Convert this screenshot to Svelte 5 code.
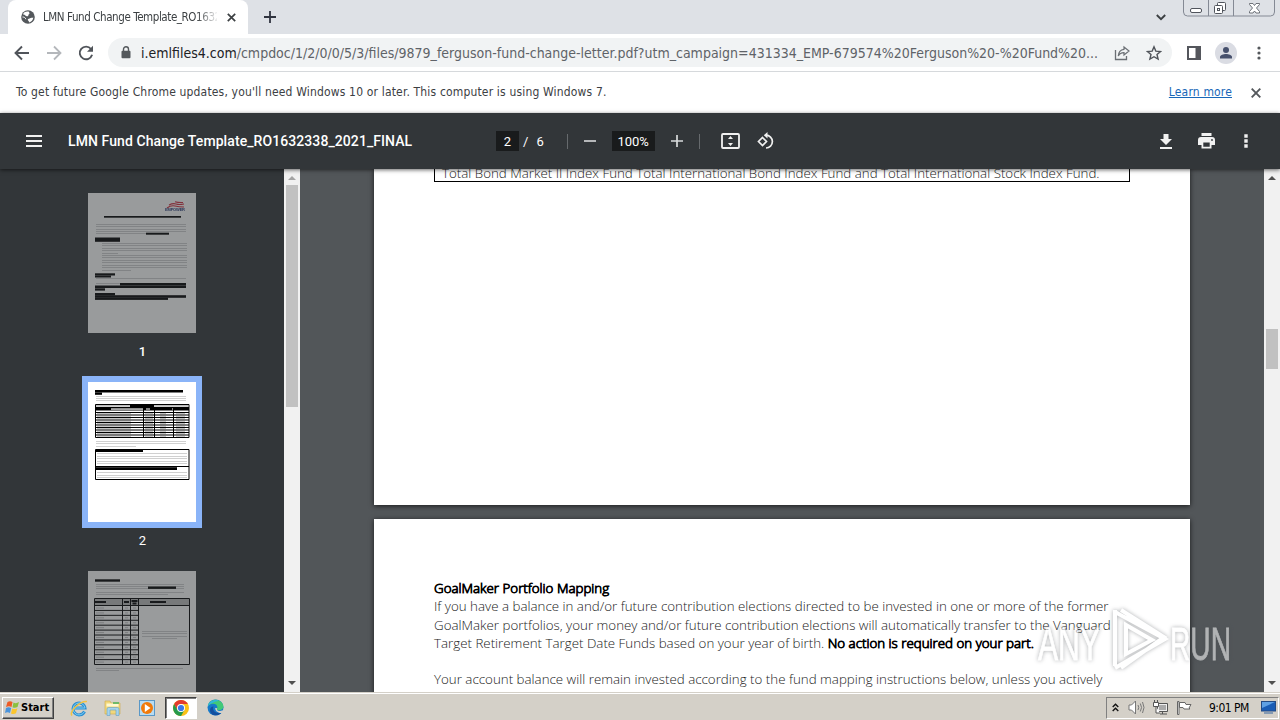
<script lang="ts">
  type Bar = [x: number, y: number, w: number, h: number]

  const address = {
    host: 'i.emlfiles4.com',
    path: '/cmpdoc/1/2/0/0/5/3/files/9879_ferguson-fund-change-letter.pdf?utm_campaign=431334_EMP-679574%20Ferguson%20-%20Fund%20...',
  }

  const row = (x: number, w: number, ys: number[]): Bar[] => ys.map((y) => [x, y, w, 0.7])

  const pages: { number: number; lines: Bar[]; bold: Bar[] }[] = [
    {
      number: 1,
      lines: [
        ...row(8, 90, [31, 33, 36, 38, 85]),
        ...row(8, 50, [40]),
        ...row(14, 85, [50, 52, 55, 57, 62, 64, 67, 69, 72, 74]),
        ...row(14, 16, [60]),
        ...row(14, 29, [77]),
        ...row(8, 24, [90]),
      ],
      bold: [
        [16, 23, 77, 1.7], [58, 39.7, 23, 2], [7, 44.5, 25, 4.3], [7, 80.3, 20, 2.2], [7, 82.5, 16, 2],
        [32, 90, 66, 2.5], [7, 92.5, 91, 2.5], [7, 95.3, 10, 2.3], [7, 100, 20, 2.4], [7, 102.2, 91, 2.6], [7, 104.6, 73, 2.3],
      ],
    },
    {
      number: 2,
      lines: [
        ...row(8, 90, [14, 16, 18, 59, 61]),
        ...row(8, 40, [64]),
        ...row(9, 90, [71, 74, 76, 79, 81, 90, 93, 95]),
      ],
      bold: [[7, 8, 88, 2.5], [7, 10.5, 7, 2.3], [8, 68, 47, 2], [8, 85.2, 81, 2.8]],
    },
    {
      number: 3,
      lines: [
        ...row(8, 88, [13, 15, 17, 21]),
        ...row(8, 72, [23]),
        ...row(54, 45, [60, 62, 65]),
        ...row(64, 25, [67]),
        ...row(8, 87, [97]),
        ...row(8, 23, [99]),
      ],
      bold: [[7, 8.3, 25, 2.4], [60, 15.5, 28, 2.4], [7, 30, 11, 2], [36, 30, 5, 2], [43.5, 29, 6, 2], [44.5, 31.5, 4, 2], [62, 30, 16, 2]],
    },
  ]

  const fundRows = Array.from({ length: 10 }, (_, i) => 30.5 + i * 2.5)
  const mappingRows = Array.from({ length: 12 }, (_, i) => 34.5 + i * 4.92)
  const current = 2
</script>

<div class="desktop">
  <div class="tabstrip">
    <div class="tab">
      <svg class="globe" width="14" height="14" viewBox="0 0 14 14">
        <circle cx="7" cy="7" r="6.8" fill="#54585c" />
        <path d="M2 4.500C4 4 4 6 6 6.300c2 .2 1-2 2.500-2.500L8 1.800C5 1 2.500 2.500 2 4.500zM8.500 8.500c1.500-1 3-.5 3.800-1-.2 2.500-2 4.500-4.200 5 .4-1-1-1.600-1.300-2.400C6.500 9 7.500 9 8.500 8.500z" fill="#fff" />
        <path d="M1.500 7c1.500 0 3 .6 3.300 2.200" stroke="#fff" fill="none" />
      </svg>
      <span class="tab-title">LMN Fund Change Template_RO1632</span>
      <svg width="9" height="9" viewBox="0 0 9 9"><path d="M.8.8l7.400 7.400M8.200.8L.8 8.200" stroke="#3c4043" stroke-width="1.700" /></svg>
    </div>
    <svg class="new-tab" width="12" height="12" viewBox="0 0 12 12"><path d="M6 0v12M0 6h12" stroke="#303440" stroke-width="1.800" /></svg>
    <svg class="tab-search" width="10" height="7" viewBox="0 0 10 7"><path d="M.8 1L5 5.200 9.200 1" stroke="#3c4043" stroke-width="1.900" fill="none" /></svg>
    <svg class="window-buttons" width="94" height="18" viewBox="0 0 94 18">
      <path d="M1.500 0v12q0 4 4 4h83q4 0 4-4V0M26.500 0v16M51.500 0v16" fill="none" stroke="#848994" />
      <rect x="8.500" y="8.500" width="11" height="4" rx="1.500" fill="#fff" stroke="#50545c" />
      <rect x="35.500" y="2.500" width="8" height="8" rx="1" fill="#fff" stroke="#50545c" />
      <rect x="32.500" y="5.500" width="8" height="8" rx="1" fill="#fff" stroke="#50545c" />
      <rect x="35.500" y="8.500" width="2" height="2" fill="none" stroke="#50545c" />
      <path d="M67.500 3.500h3.500l1.500 2 1.500-2h3.500v1l-3 3.500 3 3.500v1.500H74l-1.500-2-1.500 2h-3.500v-1.500l3-3.500-3-3.500z" fill="#fff" stroke="#60646c" stroke-width=".9" />
    </svg>
  </div>

  <div class="toolbar">
    <svg class="nav" width="16" height="16" viewBox="0 0 16 16"><path d="M15 8H2M8 1.500L1.500 8 8 14.500" fill="none" stroke="#50545a" stroke-width="1.900" /></svg>
    <svg class="nav" width="16" height="16" viewBox="0 0 16 16"><path d="M1 8h13M8 1.500L14.500 8 8 14.500" fill="none" stroke="#b4b7bb" stroke-width="1.800" /></svg>
    <svg class="nav" width="16" height="16" viewBox="0 0 16 16">
      <path d="M13 4A6.300 6.300 0 1 0 14.100 9.800" fill="none" stroke="#50545a" stroke-width="1.900" />
      <path d="M15 .8v6H9z" fill="#50545a" />
    </svg>
    <div class="omnibox">
      <svg width="10" height="13" viewBox="0 0 10 13">
        <path d="M2.500 5V3.300a2.500 2.500 0 0 1 5 0V5" fill="none" stroke="#54585c" stroke-width="1.400" />
        <rect x=".5" y="4.700" width="9" height="7.500" rx="1" fill="#54585c" />
      </svg>
      <span class="url"><b>{address.host}</b>{address.path}</span>
      <svg class="share" width="16" height="16" viewBox="0 0 16 16">
        <path d="M1.500 5v9.500h11V11" fill="none" stroke="#6b6f74" stroke-width="1.300" />
        <path d="M10 2l5 4-5 4V7.700C7.300 7.700 5.500 8.500 4.300 11c.2-4 2.300-6.300 5.700-6.700z" fill="none" stroke="#6b6f74" stroke-width="1.200" />
      </svg>
      <svg width="16" height="16" viewBox="0 0 16 16"><path d="M8 1.800l1.800 4.300 4.700.4-3.500 3 1.100 4.600L8 11.700l-4.100 2.400L5 9.500l-3.500-3 4.700-.4z" fill="none" stroke="#50545a" stroke-width="1.400" /></svg>
    </div>
    <svg class="side-panel" width="14" height="14" viewBox="0 0 14 14"><path d="M0 0h14v14H0zM2 2v10h6.500V2z" fill="#54565c" fill-rule="evenodd" /></svg>
    <svg class="avatar" width="22" height="22" viewBox="0 0 22 22">
      <circle cx="11" cy="11" r="11" fill="#dadce3" />
      <circle cx="11" cy="8" r="3" fill="#46506c" />
      <path d="M5 16.500v-1.500c0-2 3.500-3 6-3s6 1 6 3v1.500z" fill="#46506c" />
    </svg>
    <svg class="dots" width="4" height="14" viewBox="0 0 4 14"><g fill="#54585c"><circle cx="2" cy="2" r="1.600" /><circle cx="2" cy="7" r="1.600" /><circle cx="2" cy="12" r="1.600" /></g></svg>
  </div>

  <div class="infobar">
    <span class="notice">To get future Google Chrome updates, you'll need Windows 10 or later. This computer is using Windows 7.</span>
    <a href="#learn">Learn more</a>
    <svg width="10" height="10" viewBox="0 0 10 10"><path d="M.7.7l8.600 8.600M9.300.7L.7 9.300" stroke="#54585c" stroke-width="1.900" /></svg>
  </div>

  <div class="viewer-bar">
    <svg class="menu" width="16" height="12" viewBox="0 0 16 12"><path d="M0 1h16M0 6h16M0 11h16" stroke="#f1f1f1" stroke-width="2" /></svg>
    <span class="doc-title">LMN Fund Change Template_RO1632338_2021_FINAL</span>
    <div class="controls">
      <span class="field page-field">2</span>
      <span class="slash">/</span>
      <span class="count">6</span>
      <i></i>
      <svg class="minus" width="12" height="12" viewBox="0 0 12 12"><path d="M0 6h12" stroke="#d8dadb" stroke-width="1.600" /></svg>
      <span class="field zoom-field">100%</span>
      <svg class="plus" width="12" height="12" viewBox="0 0 12 12"><path d="M0 6h12M6 0v12" stroke="#d8dadb" stroke-width="1.700" /></svg>
      <i class="second"></i>
      <svg class="fit" width="19" height="16" viewBox="0 0 19 16">
        <rect x="1" y="1" width="17" height="14" rx="1" fill="none" stroke="#f1f1f1" stroke-width="1.800" />
        <path d="M9.500 3l2.500 3H7zM9.500 13L7 10h5z" fill="#f1f1f1" />
      </svg>
      <svg class="rotate" width="18" height="18" viewBox="0 0 18 18">
        <path d="M5.500 5.500L9.500 9.500l-4 4-4-4z" fill="none" stroke="#f1f1f1" stroke-width="1.700" />
        <path d="M9 3.200a6.400 6.400 0 1 1 0 12.800" fill="none" stroke="#f1f1f1" stroke-width="1.700" />
        <path d="M10.500 0v6.400L6.800 3.200z" fill="#f1f1f1" />
      </svg>
    </div>
    <div class="actions">
      <svg width="12" height="15" viewBox="0 0 12 15"><path d="M3.500 0h5v5H12l-6 6-6-6h3.500zM0 13h12v2H0z" fill="#f1f1f1" /></svg>
      <svg width="17" height="16" viewBox="0 0 17 16">
        <path d="M3.500 0h10v3h-10zM3 4h11q3 0 3 3v5h-3.500v3.500h-10V12H0V7q0-3 3-3zM5.300 9.500v4.200h6.400V9.500z" fill="#f1f1f1" fill-rule="evenodd" />
        <circle cx="14" cy="7" r=".9" fill="#323639" />
      </svg>
      <svg class="more" width="4" height="14" viewBox="0 0 4 14"><path d="M.3.3h3.400v3.400H.3zM.3 5.300h3.400v3.400H.3zM.3 10.300h3.400v3.400H.3z" fill="#f1f1f1" /></svg>
    </div>
  </div>

  <div class="viewer">
    <aside>
      {#each pages as page (page.number)}
        <div class="thumb" class:selected={page.number === current}>
          <svg width="108" height="140" viewBox="0 0 108 140">
            {#each page.lines as [x, y, w, h]}
              <rect class="faint" {x} {y} width={w} height={h} />
            {/each}
            {#if page.number === 1}
              <path d="M81 12q4-2 7-1t8 0M79 15q4-3 8-2t9 1M87 8.700q3 1 8 .8" fill="none" stroke="#d22b3d" stroke-width="1.100" />
              <text class="brand" x="77" y="18.300" textLength="20">EMPOWER</text>
            {:else if page.number === 2}
              <rect x="8" y="23" width="92" height="1.700" fill="#bbb" />
              <rect x="42" y="22" width="24" height="3" />
              <rect x="7" y="25" width="94" height="3.500" />
              <rect x="23" y="26.300" width="32" height="1.500" fill="#ccc" />
              <path d="M58 27h4M84 27h2" stroke="#fff" stroke-width="1.200" />
              <path class="grid" d="M7.500 22.500h93.500v33H7.500zM55.500 25v30M66.500 25v30M85.500 25v30" />
              {#each fundRows as y}
                <path class="grid" d="M7.500 {y}h93.500" />
                <path d="M9 {y + 1.200}h34M57 {y + 1.200}h8M72 {y + 1.200}h6M88 {y + 1.200}h9" stroke="#666" stroke-width=".5" />
              {/each}
              <path class="grid" d="M7.500 67.500h93.500v30H7.500zM7.500 84.500h93.500" />
            {:else}
              <rect x="7" y="28" width="94" height="6" fill="#bbb" />
              <path class="grid" d="M6.500 27.500h95v66h-95zM6.500 34.500h95M34.500 27.500v66M42.500 27.500v66M50.500 27.500v66" />
              {#each mappingRows as y}
                <path class="grid" d="M6.500 {y}h44" />
                <path d="M8 {y + 2.500}h8M37 {y + 2.500}h3M45 {y + 2.500}h3" stroke="#888" stroke-width=".5" />
              {/each}
            {/if}
            {#each page.bold as [x, y, w, h]}
              <rect {x} {y} width={w} height={h} />
            {/each}
          </svg>
          <span>{page.number}</span>
        </div>
      {/each}
    </aside>

    <div class="scroll side-scroll">
      <svg width="8" height="5" viewBox="0 0 8 5"><path d="M0 5l4-4 4 4z" fill="#a3a3a3" /></svg>
      <div class="handle"></div>
      <svg width="8" height="5" viewBox="0 0 8 5"><path d="M0 0l4 4 4-4z" fill="#505050" /></svg>
    </div>

    <main>
      <section class="sheet upper">
        <p class="cell">Total Bond Market II Index Fund Total International Bond Index Fund and Total International Stock Index Fund.</p>
      </section>
      <section class="sheet lower">
        <h2>GoalMaker Portfolio Mapping</h2>
        <p>If you have a balance in and/or future contribution elections directed to be invested in one or more of the former</p>
        <p>GoalMaker portfolios, your money and/or future contribution elections will automatically transfer to the Vanguard</p>
        <p>Target Retirement Target Date Funds based on your year of birth. <b>No action is required on your part.</b></p>
        <p class="next">Your account balance will remain invested according to the fund mapping instructions below, unless you actively</p>
      </section>
    </main>

    <div class="scroll page-scroll">
      <svg width="8" height="5" viewBox="0 0 8 5"><path d="M0 5l4-4 4 4z" fill="#505050" /></svg>
      <div class="handle"></div>
      <svg width="8" height="5" viewBox="0 0 8 5"><path d="M0 0l4 4 4-4z" fill="#505050" /></svg>
    </div>
  </div>

  <div class="taskbar">
    <div class="start">
      <svg width="15" height="15" viewBox="0 0 15 15">
        <path d="M2.500 2q2.500-1.500 5 0L6.500 7q-2.500-1.500-5.500 0z" fill="#ee5b25" />
        <path d="M8.500 2.500q2.500 1.500 5.500-.5l-1.500 5q-2.500 1.500-5 .3z" fill="#8bc03f" />
        <path d="M1 8q2.500-1.500 5.200 0L5 13q-2.500-1.500-5 0z" fill="#4a94dc" />
        <path d="M7.200 8.500q2.500 1.300 5.200-.3l-1.400 5q-2.500 1.500-5 .2z" fill="#fbc52c" />
      </svg>
      <span>Start</span>
    </div>
    <div class="apps">
      <div>
        <svg width="18" height="18" viewBox="0 0 18 18">
          <path d="M14.500 12.500A6 6 0 1 1 15 9H5" fill="none" stroke="#2b8ed2" stroke-width="3" />
          <path d="M14.500 12.500A6 6 0 1 1 15 9H5" fill="none" stroke="#7fd0f2" stroke-width="1" />
          <path d="M2 16.500C-1.500 13 10 1.500 17 2.500" fill="none" stroke="#f2c341" stroke-width="1.500" />
        </svg>
      </div>
      <div>
        <svg width="18" height="18" viewBox="0 0 18 18">
          <path d="M1 2h5l1 2h9v11H1z" fill="#f1d77b" stroke="#cda94a" stroke-width=".6" />
          <path d="M2.500 4.500h12v3h-12z" fill="#fff8d0" />
          <path d="M9 3h6v2H9z" fill="#6fb969" />
          <path d="M3 16.500V10q0-1.500 1.500-1.500h9Q15 8.500 15 10v6.500h-3V11H6v5.500z" fill="#a5d4ed" stroke="#649fc4" stroke-width=".6" />
        </svg>
      </div>
      <div>
        <svg width="16" height="16" viewBox="0 0 16 16">
          <rect x=".5" y=".5" width="15" height="15" fill="#b8dcf2" stroke="#5a98c7" />
          <circle cx="8" cy="8" r="6" fill="#f17a0a" />
          <path d="M5.800 4l5.700 4-5.700 4z" fill="#fff" />
        </svg>
      </div>
      <div class="active">
        <svg width="16" height="16" viewBox="0 0 16 16">
          <circle cx="8" cy="8" r="8" fill="#fbc116" />
          <path d="M8 4h6.900A8 8 0 0 0 1.100 4L4.500 10z" fill="#e33b2e" />
          <path d="M1.100 4A8 8 0 0 0 8 16l3.500-6H4.500z" fill="#269a4c" />
          <circle cx="8" cy="8" r="4" fill="#fff" />
          <circle cx="8" cy="8" r="3.100" fill="#3b78e7" />
        </svg>
      </div>
      <div>
        <svg width="17" height="17" viewBox="0 0 17 17">
          <circle cx="8.500" cy="8.500" r="8" fill="#1679ca" />
          <path d="M1 7C2 1 9-1 13.500 2.500 17 5 18 10 13 11.200c-3 .5-4-1-2.800-2C11 7 9 4.500 6 4.700 3.500 4.800 2 6 1 7z" fill="#42c977" />
          <path d="M1 7c1-5 7-7 11-5.300C10 2 5 3 1 7z" fill="#2fb5df" />
          <path d="M6.500 7.500C5 11 8 15.500 14.500 13.500 11 18 3.500 17 3 11.500 3 9 4.500 7.500 6.500 7.500z" fill="#134f9f" />
          <path d="M10.300 9.200C9.500 10 10 12 13 12l4-1-1.500 2.700C12 15 8 12 8.200 9z" fill="#d4d0c8" />
        </svg>
      </div>
    </div>
    <div class="tray">
      <svg class="chevrons" width="7" height="9" viewBox="0 0 7 9"><path d="M.7 4l2.800-2.800L6.300 4M.7 8l2.800-2.800L6.300 8" fill="none" stroke="#111" stroke-width="1.400" /></svg>
      <svg class="speaker" width="17" height="15" viewBox="0 0 17 15">
        <path d="M1 5h2.500L7.500 1v13l-4-4H1z" fill="#fff" stroke="#777" />
        <path d="M10 5q1.500 2.500 0 5M12.300 3.500q2.500 4 0 8M14.500 2q3 5.500 0 11" fill="none" stroke="#777" />
      </svg>
      <svg class="network" width="17" height="16" viewBox="0 0 17 16">
        <path d="M5.500 3.500h10v8h-10zM8 14h7M10.500 11.500V14" fill="#b5b5b5" stroke="#555" />
        <rect x="6.500" y="4.500" width="8" height="6" fill="#aaa" stroke="#eee" />
        <path d="M1.500 2.500h5v4h-5zM2.500 0v2M5.500 0v2M4 6.500V13h4" fill="#fff" stroke="#555" />
      </svg>
      <svg class="flag" width="16" height="15" viewBox="0 0 16 15"><path d="M1.500 14.500V1.500h1.500v13zM3.500 2.500h5.500l1 2h5l-2 3.500 1 1H8l-1-1.500H3.500z" fill="#fff" stroke="#666" /></svg>
      <span>9:01 PM</span>
      <svg class="show-desktop" width="15" height="13" viewBox="0 0 15 13">
        <rect x=".5" y=".5" width="14" height="9.500" fill="#1a5db5" stroke="#234b84" />
        <path d="M1 1h13L1 7z" fill="#5fa1e4" />
        <path d="M3 12h9" stroke="#6a89ad" stroke-width="1.500" />
      </svg>
    </div>
  </div>

  <svg class="watermark" width="200" height="68" viewBox="0 0 200 68">
    <text x="4" y="53" textLength="62" lengthAdjust="spacingAndGlyphs">ANY</text>
    <path d="M81 3v56M87 3l43 27-43 31M81 5l50 27-50 29M92 18v29l26-14z" />
    <text x="136" y="53" textLength="61" lengthAdjust="spacingAndGlyphs">RUN</text>
  </svg>
</div>

<style>
  :global(body) {
    margin: 0;
    overflow: hidden;
  }

  .desktop {
    position: relative;
    display: flex;
    flex-direction: column;
    width: 1280px;
    height: 720px;
    overflow: hidden;
    background: #fff;
    font-family: 'DejaVu Sans Condensed', 'DejaVu Sans', sans-serif;
    font-stretch: condensed;
    font-size: 12px;
    color: #3c4043;
    white-space: nowrap;
  }

  svg {
    display: block;
    flex: none;
  }

  .tabstrip {
    display: flex;
    align-items: flex-start;
    height: 34px;
    padding-left: 8px;
    background: #dee1e6;
  }

  .tab {
    display: flex;
    align-items: center;
    box-sizing: border-box;
    width: 240px;
    height: 34px;
    padding: 0 12px 0 13px;
    border-radius: 8px 8px 0 0;
    background: #fff;
  }

  .tab-title {
    width: 175px;
    margin: 0 10px 0 8px;
    overflow: hidden;
    mask-image: linear-gradient(to right, #000 154px, transparent 176px);
    font-size: 11.5px;
    letter-spacing: -0.42px;
  }

  .new-tab {
    margin: 11px 0 0 16px;
  }

  .tab-search {
    margin: 14px 16px 0 auto;
  }

  .window-buttons {
    margin-right: 4px;
  }

  .toolbar {
    display: flex;
    align-items: center;
    height: 37px;
    padding-left: 14px;
    border-bottom: 1px solid #d6d9dc;
  }

  .nav {
    margin-right: 16px;
  }

  .omnibox {
    display: flex;
    align-items: center;
    box-sizing: border-box;
    width: 1064px;
    height: 29px;
    margin-left: -2px;
    padding: 0 10px 0 13px;
    border-radius: 15px;
    background: #f1f3f4;
  }

  .url {
    width: 962px;
    margin-left: 10px;
    font-size: 14px;
    color: #5f6368;
  }

  .url b {
    font-weight: 400;
    color: #202124;
  }

  .share {
    margin: 0 16px 0 auto;
  }

  .side-panel {
    margin-left: 15px;
  }

  .avatar {
    margin-left: 14px;
  }

  .dots {
    margin-left: 20px;
  }

  .infobar {
    display: flex;
    align-items: center;
    height: 41px;
    padding: 0 19px 0 16px;
  }

  .notice,
  .infobar a {
    padding-bottom: 2px;
    letter-spacing: 0.165px;
  }

  .infobar a {
    margin: 0 19px 0 auto;
    color: #1967b8;
  }

  .viewer-bar {
    position: relative;
    z-index: 1;
    display: flex;
    align-items: center;
    height: 56px;
    padding: 0 32px 0 26px;
    background: #323639;
    box-shadow: 0 1px 4px rgba(0, 0, 0, 0.6);
    color: #fff;
    font-family: Roboto, sans-serif;
    font-stretch: normal;
    font-size: 13px;
  }

  .doc-title {
    width: 428px;
    margin-left: 26px;
    font-size: 14px;
    font-weight: 500;
    letter-spacing: 0.08px;
  }

  .controls,
  .actions {
    display: flex;
    align-items: center;
  }

  .field {
    height: 20px;
    line-height: 21px;
    background: #191b1c;
    text-align: center;
  }

  .page-field {
    width: 23px;
  }

  .slash {
    margin: 0 8px 0 4px;
  }

  .controls i {
    width: 1px;
    height: 15px;
    margin-left: 23px;
    background: #666a6d;
  }

  .controls .second {
    margin-left: 16px;
  }

  .minus {
    margin: 0 16px;
  }

  .zoom-field {
    width: 43px;
  }

  .plus {
    margin-left: 16px;
  }

  .fit {
    margin: 0 17px 0 21px;
  }

  .actions {
    gap: 26px;
    margin-left: auto;
  }

  .more {
    margin-left: 3px;
  }

  .viewer {
    display: flex;
    height: 523px;
    overflow: hidden;
    background: #525659;
  }

  aside {
    box-sizing: border-box;
    width: 284px;
    padding-top: 24px;
    background: #323639;
  }

  .thumb {
    display: flex;
    flex-direction: column;
    align-items: center;
    height: 189px;
    color: #fff;
    font: 500 13px/17px Roboto, sans-serif;
  }

  .thumb svg {
    background: #fff;
    opacity: 0.5;
  }

  .thumb.selected svg {
    opacity: 1;
    box-shadow: 0 0 0 6px #8ab4f8;
  }

  .thumb span {
    margin: 10px 0 0 1px;
  }

  .thumb.selected span {
    font-weight: 400;
  }

  .faint {
    fill: #999;
    opacity: 0.65;
  }

  .grid {
    fill: none;
    stroke: #000;
    stroke-width: 1;
  }

  .brand {
    fill: #263b78;
    font: 700 4px 'Liberation Sans', sans-serif;
  }

  .scroll {
    display: flex;
    flex-direction: column;
    align-items: center;
    justify-content: space-between;
    box-sizing: border-box;
    width: 16px;
    padding: 6px 0;
    background: #f1f1f1;
  }

  .handle {
    width: 12px;
    background: #c1c1c1;
  }

  .side-scroll .handle {
    height: 222px;
    margin: 5px 0 auto;
  }

  .page-scroll .handle {
    height: 40px;
    margin: 149px 0 auto;
  }

  main {
    width: 964px;
  }

  .sheet {
    box-sizing: border-box;
    width: 816px;
    margin-left: 74px;
    padding: 0 60px;
    overflow: hidden;
    background: #fff;
    box-shadow: 0 1px 5px rgba(0, 0, 0, 0.7);
    color: #222;
    font: 300 13.33px/18.3px 'Open Sans', sans-serif;
  }

  .upper {
    height: 336px;
    margin-bottom: 14px;
  }

  .lower {
    height: 190px;
    padding-top: 60px;
  }

  .sheet p,
  .sheet h2 {
    margin: 0;
    font-size: 13.33px;
  }

  .sheet h2,
  .sheet b {
    color: #000;
    font-weight: 300;
    -webkit-text-stroke: 0.8px #000;
  }

  .sheet .cell {
    box-sizing: border-box;
    width: 696px;
    height: 13px;
    padding-left: 7px;
    border: 1px solid #000;
    border-top: 0;
    line-height: 8px;
  }

  .sheet .next {
    margin-top: 18px;
  }

  .taskbar {
    display: flex;
    align-items: center;
    box-sizing: border-box;
    height: 28px;
    padding: 2px 1px 0 2px;
    border-top: 1px solid #d4d0c8;
    background: #d4d0c8;
    box-shadow: inset 0 1px #fff;
    color: #000;
  }

  .start {
    display: flex;
    align-items: center;
    box-sizing: border-box;
    width: 52px;
    height: 22px;
    padding-left: 2px;
    border: 1px solid;
    border-color: #fff #404040 #404040 #fff;
    box-shadow: inset -1px -1px #808080;
    font-size: 11px;
    font-weight: 700;
  }

  .start span {
    margin-left: 1px;
  }

  .apps {
    display: flex;
    gap: 2px;
    margin-left: 9px;
  }

  .apps div {
    display: grid;
    place-items: center;
    box-sizing: border-box;
    width: 32px;
    height: 22px;
  }

  .apps .active {
    border: 1px solid;
    border-color: #404040 #fff #fff #404040;
    background: #fff;
    box-shadow: inset 1px 1px #808080;
  }

  .tray {
    display: flex;
    align-items: center;
    box-sizing: border-box;
    width: 173px;
    height: 22px;
    margin-left: auto;
    padding-left: 5px;
    border: 1px solid;
    border-color: #808080 #fff #fff #808080;
    font-size: 12px;
  }

  .speaker {
    margin-left: 9px;
  }

  .network {
    margin-left: 7px;
  }

  .flag {
    margin-left: 7px;
  }

  .tray span {
    margin-left: 17px;
    letter-spacing: -0.55px;
  }

  .show-desktop {
    margin: 0 2px 0 auto;
  }

  .watermark {
    position: absolute;
    top: 607px;
    left: 1034px;
    z-index: 2;
    filter: drop-shadow(0 0 2px rgba(70, 75, 80, 0.8));
    opacity: 0.55;
  }

  .watermark text {
    fill: #fff;
    stroke: #fff;
    stroke-width: 0.8;
    font: 47px 'Liberation Sans', sans-serif;
  }

  .watermark path {
    fill: none;
    stroke: #fff;
    stroke-width: 4;
  }
</style>
